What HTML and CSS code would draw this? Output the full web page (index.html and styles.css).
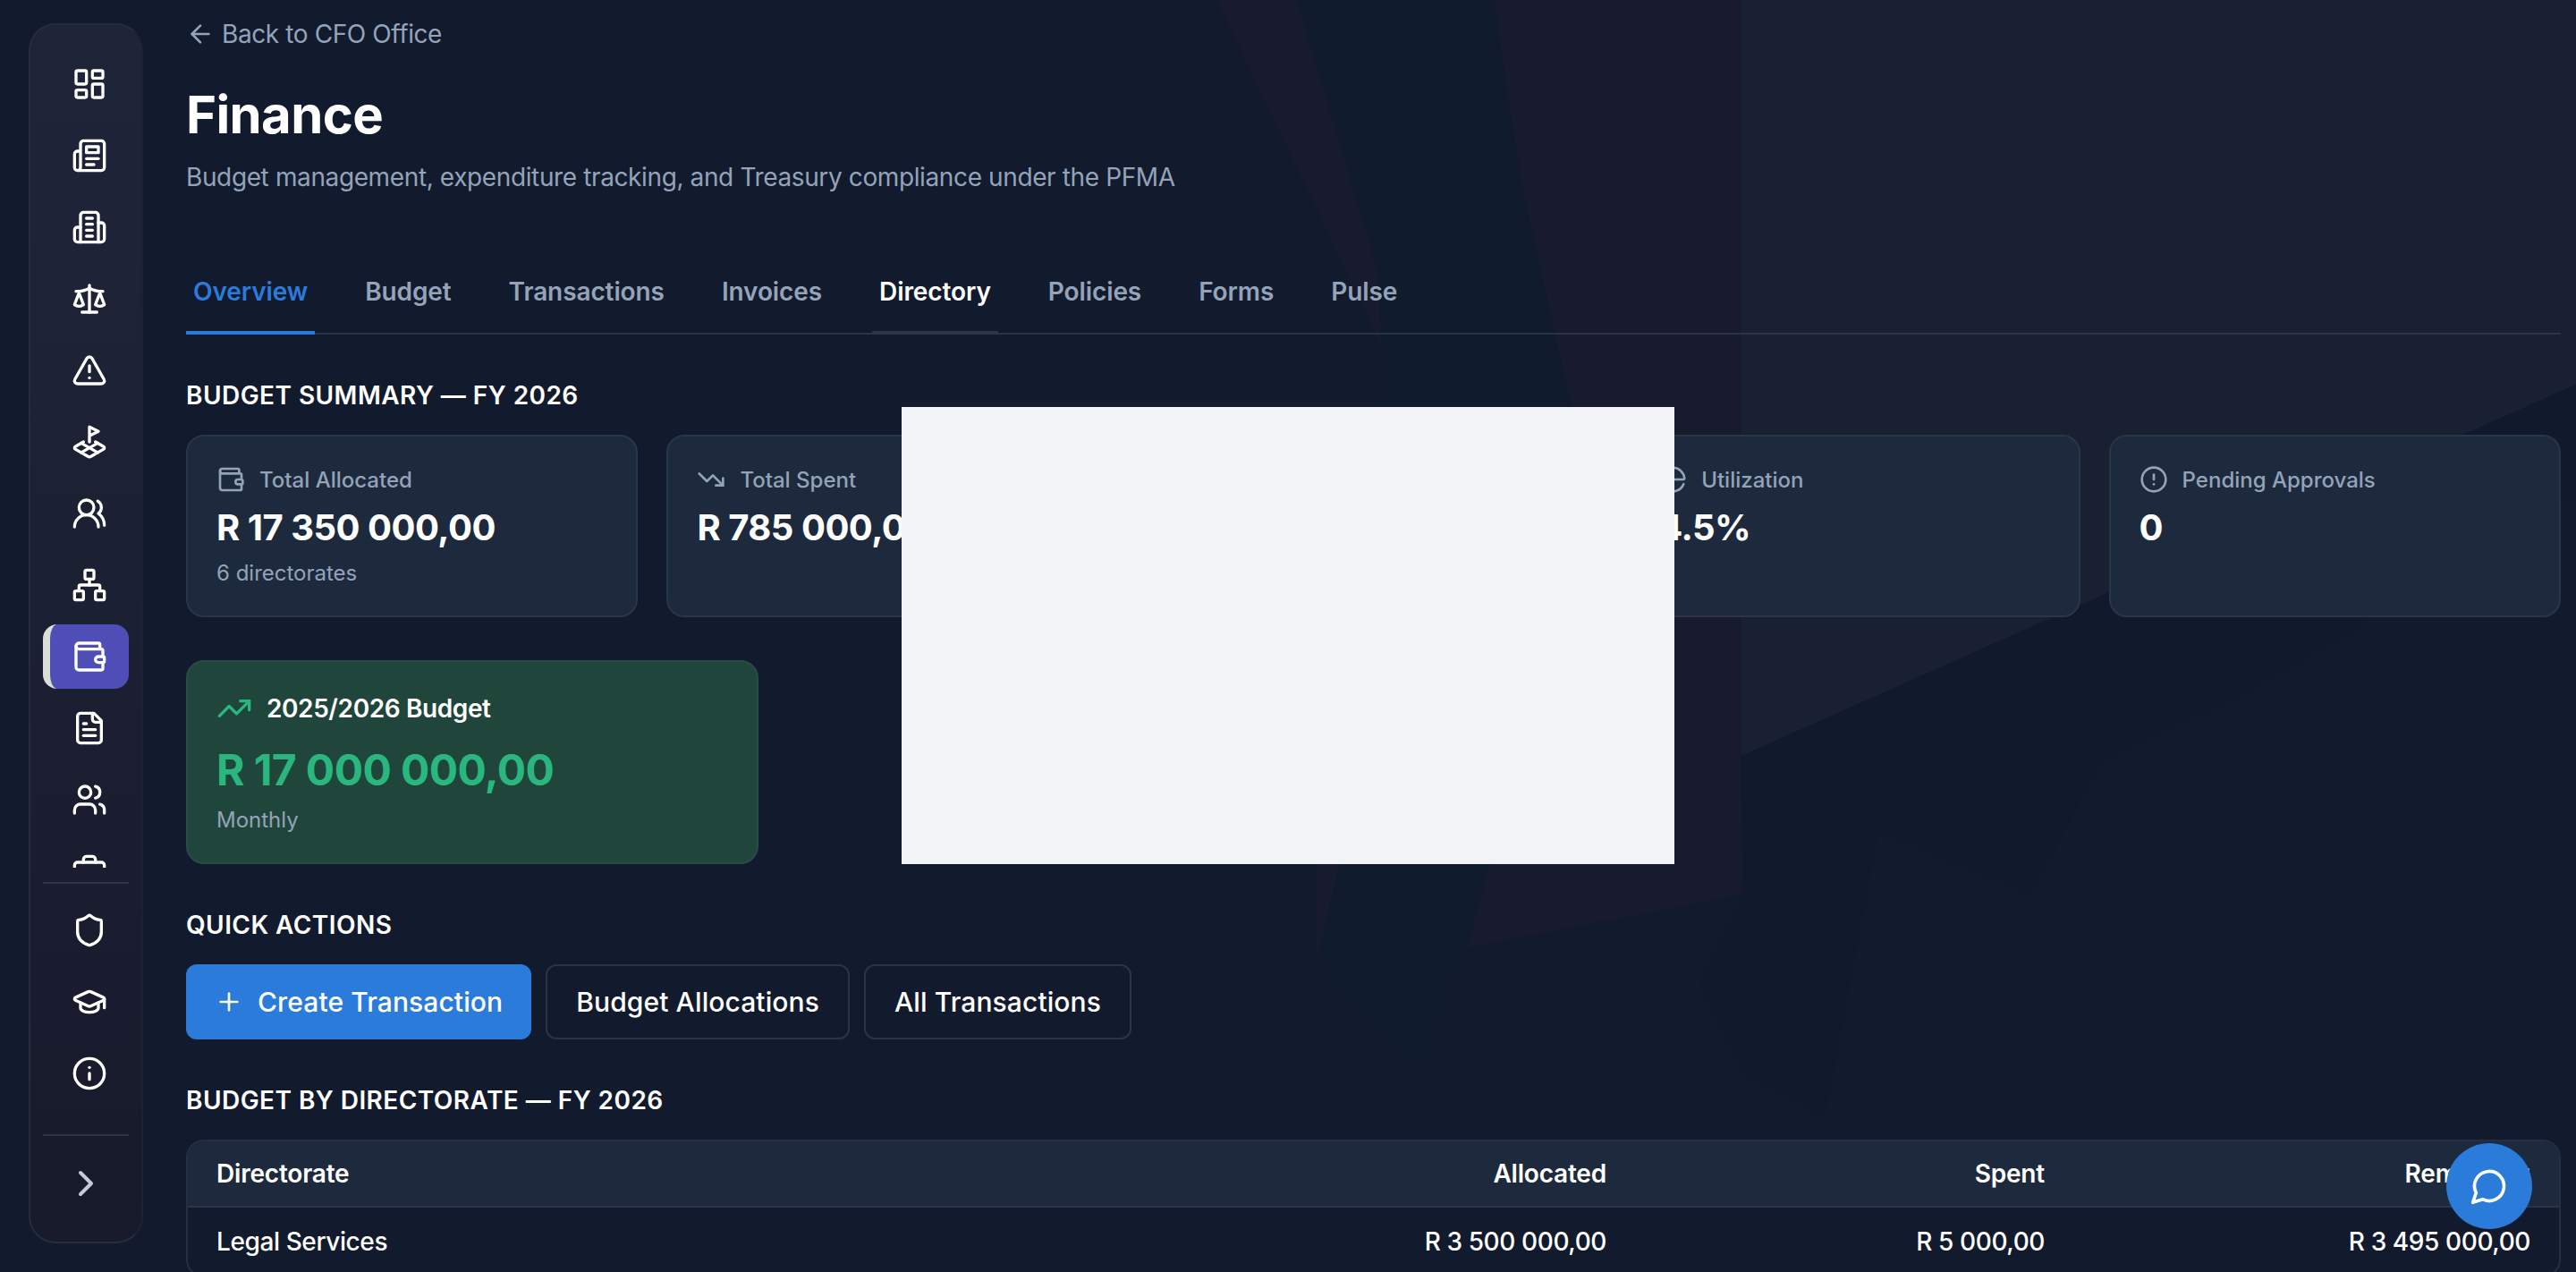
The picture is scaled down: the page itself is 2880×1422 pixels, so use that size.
FILE: index.html
```html
<!DOCTYPE html>
<html>
	<head>
		<meta charset="UTF-8">
		<title>Finance</title>
		<link rel="stylesheet" href="styles.css">
	</head>
	<body>
		<!-- faint shapes behind the page -->
		<svg class="backdrop" viewBox="0 0 2880 1422">
			<polygon class="bg-light" points="1947,0 2880,0 2880,430 1947,845"/>
			<polygon class="bg-red" points="1360,0 1947,0 1947,1000 1640,1060 1590,1075 1472,1075 1472,966 1560,700 1575,450"/>
			<polygon class="bg-navy" points="1450,0 1670,0 1700,200 1780,560 1700,840 1640,1060 1590,1200 1472,1075 1560,700 1540,300"/>
			<polygon class="bg-dark" points="1947,845 2880,430 2880,560 2700,520 2640,700 2500,780 2350,850 2270,1000 2100,930 2040,1250 1950,1200 1900,1100 1950,1000"/>
		</svg>

		<aside class="sidebar">
			<nav class="nav-scroll">
				<a class="nav-item"><svg class="icon" viewBox="0 0 24 24"><rect x="3" y="3" width="7" height="9" rx="1"/><rect x="14" y="3" width="7" height="5" rx="1"/><rect x="14" y="12" width="7" height="9" rx="1"/><rect x="3" y="16" width="7" height="5" rx="1"/></svg></a>
				<a class="nav-item"><svg class="icon" viewBox="0 0 24 24"><path d="M4 22h16a2 2 0 0 0 2-2V4a2 2 0 0 0-2-2H8a2 2 0 0 0-2 2v16a2 2 0 0 1-2 2Zm0 0a2 2 0 0 1-2-2v-9c0-1.1.9-2 2-2h2"/><path d="M18 14h-8"/><path d="M15 18h-5"/><path d="M10 6h8v4h-8V6Z"/></svg></a>
				<a class="nav-item"><svg class="icon" viewBox="0 0 24 24"><path d="M6 22V4a2 2 0 0 1 2-2h8a2 2 0 0 1 2 2v18Z"/><path d="M6 12H4a2 2 0 0 0-2 2v6a2 2 0 0 0 2 2h2"/><path d="M18 9h2a2 2 0 0 1 2 2v9a2 2 0 0 1-2 2h-2"/><path d="M10 6h4"/><path d="M10 10h4"/><path d="M10 14h4"/><path d="M10 18h4"/></svg></a>
				<a class="nav-item"><svg class="icon" viewBox="0 0 24 24"><path d="m16 16 3-8 3 8c-.87.65-1.92 1-3 1s-2.13-.35-3-1Z"/><path d="m2 16 3-8 3 8c-.87.65-1.92 1-3 1s-2.13-.35-3-1Z"/><path d="M7 21h10"/><path d="M12 3v18"/><path d="M3 7h2c2 0 5-1 7-2 2 1 5 2 7 2h2"/></svg></a>
				<a class="nav-item"><svg class="icon" viewBox="0 0 24 24"><path d="m21.73 18-8-14a2 2 0 0 0-3.48 0l-8 14A2 2 0 0 0 4 21h16a2 2 0 0 0 1.73-3"/><path d="M12 9v4"/><path d="M12 17h.01"/></svg></a>
				<a class="nav-item"><svg class="icon" viewBox="0 0 24 24"><path d="m12 8 6-3-6-3v10"/><path d="m8 11.99-5.5 3.14a1 1 0 0 0 0 1.74l8.5 4.86a2 2 0 0 0 2 0l8.5-4.86a1 1 0 0 0 0-1.74L16 12"/><path d="m6.49 12.85 11.02 6.3"/><path d="M17.51 12.85 6.5 19.15"/></svg></a>
				<a class="nav-item"><svg class="icon" viewBox="0 0 24 24"><path d="M18 21a8 8 0 0 0-16 0"/><circle cx="10" cy="8" r="5"/><path d="M22 20c0-3.37-2-6.5-4-8a5 5 0 0 0-.45-8.3"/></svg></a>
				<a class="nav-item"><svg class="icon" viewBox="0 0 24 24"><rect x="16" y="16" width="6" height="6" rx="1"/><rect x="2" y="16" width="6" height="6" rx="1"/><rect x="9" y="2" width="6" height="6" rx="1"/><path d="M5 16v-3a1 1 0 0 1 1-1h12a1 1 0 0 1 1 1v3"/><path d="M12 12V8"/></svg></a>
				<a class="nav-item active"><svg class="icon" viewBox="0 0 24 24"><path d="M19 7V4a1 1 0 0 0-1-1H5a2 2 0 0 0 0 4h15a1 1 0 0 1 1 1v4h-3a2 2 0 0 0 0 4h3a1 1 0 0 0 1-1v-2a1 1 0 0 0-1-1"/><path d="M3 5v14a2 2 0 0 0 2 2h15a1 1 0 0 0 1-1v-4"/></svg></a>
				<a class="nav-item"><svg class="icon" viewBox="0 0 24 24"><path d="M15 2H6a2 2 0 0 0-2 2v16a2 2 0 0 0 2 2h12a2 2 0 0 0 2-2V7Z"/><path d="M14 2v4a2 2 0 0 0 2 2h4"/><path d="M10 9H8"/><path d="M16 13H8"/><path d="M16 17H8"/></svg></a>
				<a class="nav-item"><svg class="icon" viewBox="0 0 24 24"><path d="M16 21v-2a4 4 0 0 0-4-4H6a4 4 0 0 0-4 4v2"/><circle cx="9" cy="7" r="4"/><path d="M22 21v-2a4 4 0 0 0-3-3.87"/><path d="M16 3.13a4 4 0 0 1 0 7.75"/></svg></a>
				<a class="nav-item"><svg class="icon" viewBox="0 0 24 24"><path d="M12 12h.01"/><path d="M16 6V4a2 2 0 0 0-2-2h-4a2 2 0 0 0-2 2v2"/><path d="M22 13a18.15 18.15 0 0 1-20 0"/><rect x="2" y="6" width="20" height="14" rx="2"/></svg></a>
			</nav>
			<hr class="nav-line">
			<nav class="nav-foot">
				<a class="nav-item"><svg class="icon" viewBox="0 0 24 24"><path d="M20 13c0 5-3.5 7.5-7.66 8.95a1 1 0 0 1-.67-.01C7.5 20.5 4 18 4 13V6a1 1 0 0 1 1-1c2 0 4.5-1.2 6.24-2.72a1.17 1.17 0 0 1 1.52 0C14.51 3.81 17 5 19 5a1 1 0 0 1 1 1z"/></svg></a>
				<a class="nav-item"><svg class="icon" viewBox="0 0 24 24"><path d="M21.42 10.922a1 1 0 0 0-.019-1.838L12.83 5.18a2 2 0 0 0-1.66 0L2.6 9.08a1 1 0 0 0 0 1.832l8.57 3.908a2 2 0 0 0 1.66 0z"/><path d="M22 10v6"/><path d="M6 12.5V16a6 3 0 0 0 12 0v-3.5"/></svg></a>
				<a class="nav-item"><svg class="icon" viewBox="0 0 24 24"><circle cx="12" cy="12" r="10"/><path d="M12 16v-4"/><path d="M12 8h.01"/></svg></a>
			</nav>
			<hr class="nav-line bottom">
			<a class="collapse"><svg class="icon-collapse" viewBox="0 0 24 24"><path d="m9 18 6-6-6-6"/></svg></a>
		</aside>

		<main class="main">
			<a class="back"><svg class="icon-back" viewBox="0 0 24 24"><path d="m12 19-7-7 7-7"/><path d="M19 12H5"/></svg>Back to CFO Office</a>
			<h1 class="title">Finance</h1>
			<p class="subtitle">Budget management, expenditure tracking, and Treasury compliance under the PFMA</p>

			<div class="tabs">
				<a class="tab current">Overview</a>
				<a class="tab">Budget</a>
				<a class="tab">Transactions</a>
				<a class="tab">Invoices</a>
				<a class="tab hover">Directory</a>
				<a class="tab">Policies</a>
				<a class="tab">Forms</a>
				<a class="tab">Pulse</a>
			</div>

			<h2 class="section summary-title">BUDGET SUMMARY — FY 2026</h2>
			<div class="cards">
				<div class="card">
					<div class="card-label"><svg class="icon-sm" viewBox="0 0 24 24"><path d="M19 7V4a1 1 0 0 0-1-1H5a2 2 0 0 0 0 4h15a1 1 0 0 1 1 1v4h-3a2 2 0 0 0 0 4h3a1 1 0 0 0 1-1v-2a1 1 0 0 0-1-1"/><path d="M3 5v14a2 2 0 0 0 2 2h15a1 1 0 0 0 1-1v-4"/></svg>Total Allocated</div>
					<div class="card-value">R 17 350 000,00</div>
					<div class="card-note">6 directorates</div>
				</div>
				<div class="card">
					<div class="card-label"><svg class="icon-sm" viewBox="0 0 24 24"><path d="M16 17h6v-6"/><path d="m22 17-8.5-8.5-5 5L2 7"/></svg>Total Spent</div>
					<div class="card-value">R 785 000,00</div>
				</div>
				<div class="card">
					<div class="card-label"><svg class="icon-sm" viewBox="0 0 24 24"><circle cx="12" cy="12" r="10"/></svg>Remaining</div>
					<div class="card-value">R 16 565 000,00</div>
				</div>
				<div class="card">
					<div class="card-label"><svg class="icon-sm" viewBox="0 0 24 24"><path d="M21 12c.552 0 1.005-.449.95-.998a10 10 0 0 0-8.953-8.951c-.55-.055-.998.398-.998.95v8a1 1 0 0 0 1 1z"/><path d="M21.21 15.89A10 10 0 1 1 8 2.83"/></svg>Utilization</div>
					<div class="card-value">4.5%</div>
				</div>
				<div class="card">
					<div class="card-label"><svg class="icon-sm" viewBox="0 0 24 24"><circle cx="12" cy="12" r="10"/><path d="M12 8v4"/><path d="M12 16h.01"/></svg>Pending Approvals</div>
					<div class="card-value">0</div>
				</div>
			</div>

			<div class="budget-card">
				<div class="budget-label"><svg class="icon-trend" viewBox="0 0 24 24"><path d="M16 7h6v6"/><path d="m22 7-8.5 8.5-5-5L2 17"/></svg>2025/2026 Budget</div>
				<div class="budget-value">R 17 000 000,00</div>
				<div class="budget-note">Monthly</div>
			</div>

			<h2 class="section actions-title">QUICK ACTIONS</h2>
			<div class="actions">
				<a class="btn primary"><svg class="icon-plus" viewBox="0 0 24 24"><path d="M5 12h14"/><path d="M12 5v14"/></svg>Create Transaction</a>
				<a class="btn">Budget Allocations</a>
				<a class="btn">All Transactions</a>
			</div>

			<h2 class="section table-title">BUDGET BY DIRECTORATE — FY 2026</h2>
			<table class="budget-table" cellspacing="0" cellpadding="0">
				<tr>
					<th class="name">Directorate</th>
					<th class="col-allocated">Allocated</th>
					<th class="col-spent">Spent</th>
					<th class="col-remaining">Remaining</th>
				</tr>
				<tr>
					<td class="name">Legal Services</td>
					<td>R 3 500 000,00</td>
					<td>R 5 000,00</td>
					<td>R 3 495 000,00</td>
				</tr>
			</table>
		</main>

		<div class="redacted"></div>
		<a class="chat"><svg class="icon-chat" viewBox="0 0 24 24"><path d="M7.9 20A9 9 0 1 0 4 16.1L2 22Z"/></svg></a>
	</body>
</html>
```

FILE: styles.css
```css
* {
	box-sizing: border-box;
}

html,
body {
	margin: 0;
	padding: 0;
	height: 1422px;
	overflow: hidden;
}

body {
	display: flex;
	align-items: flex-start;
	font-family: Inter, "Liberation Sans", sans-serif;
	color: #fff;
	background: #121a2d;
}

svg {
	fill: none;
	stroke: currentColor;
	stroke-width: 2;
	stroke-linecap: round;
	stroke-linejoin: round;
	flex-shrink: 0;
}

.backdrop {
	position: absolute;
	left: 0;
	top: 0;
	width: 2880px;
	height: 1422px;
	stroke: none;
	z-index: -1;
}

.bg-light {
	fill: #182032;
}

.bg-red {
	fill: #171b2d;
}

.bg-navy {
	fill: #111b2e;
}

.bg-dark {
	fill: #11192c;
}

/* sidebar */
.sidebar {
	width: 128px;
	height: 1364px;
	margin: 26px 0 0 32px;
	flex-shrink: 0;
	padding: 0 16px;
	background: linear-gradient(180deg, #1f2539 0%, #1c2033 45%, #171a2b 100%);
	border: 2px solid #262c3e;
	border-right-color: #1d2131;
	border-radius: 30px;
}

.nav-scroll {
	height: 912px;
	margin: 30px -2px 0;
	overflow: hidden;
}

.nav-item {
	display: flex;
	align-items: center;
	justify-content: center;
	width: 96px;
	height: 72px;
	margin-bottom: 8px;
	border-left: 8px solid transparent;
	border-radius: 16px;
	color: #fff;
}

.nav-item.active {
	background: #4f4db6;
	border-left-color: #dcdcd8;
}

.icon {
	width: 40px;
	height: 40px;
}

.nav-line {
	height: 2px;
	margin: 16px -2px 0;
	border: 0;
	background: #2b3648;
}

.nav-foot {
	margin: 16px -2px 0;
}

.nav-line.bottom {
	margin-top: 32px;
}

.collapse {
	display: flex;
	align-items: center;
	justify-content: center;
	width: 96px;
	height: 36px;
	margin: 35px 0 0 -2px;
	color: #c8c9d6;
}

.icon-collapse {
	width: 48px;
	height: 48px;
}

/* main column */
.main {
	flex: 1;
	min-width: 0;
	padding: 21px 17px 0 48px;
}

.back {
	display: flex;
	align-items: center;
	gap: 8px;
	height: 34px;
	font-size: 28px;
	letter-spacing: -0.4px;
	color: #94a3b8;
}

.icon-back {
	width: 32px;
	height: 32px;
}

.title {
	margin: 37px 0 0;
	font-size: 58px;
	line-height: 72px;
	font-weight: 700;
	letter-spacing: -0.6px;
}

.subtitle {
	margin: 14px 0 0;
	font-size: 28px;
	line-height: 40px;
	letter-spacing: -0.38px;
	color: #94a3b8;
}

.tabs {
	display: flex;
	gap: 48px;
	margin-top: 88px;
	border-bottom: 2px solid #2a3446;
}

.tab {
	padding: 0 8px 24px;
	margin-bottom: -2px;
	font-size: 28px;
	line-height: 40px;
	font-weight: 600;
	letter-spacing: -0.1px;
	color: #94a3b8;
	border-bottom: 4px solid transparent;
}

.tab.current {
	color: #2b7bdb;
	border-bottom-color: #2b7bdb;
}

.tab.hover {
	color: #fff;
	border-bottom-color: #2b3648;
}

.section {
	margin: 0;
	font-size: 28px;
	line-height: 40px;
	font-weight: 600;
	letter-spacing: 0.45px;
}

.summary-title {
	margin-top: 48px;
}

.cards {
	display: grid;
	grid-template-columns: repeat(5, 1fr);
	gap: 32px;
	margin-top: 24px;
}

.card {
	height: 204px;
	padding: 32px;
	background: #1d2a3e;
	border: 2px solid #2a3648;
	border-radius: 20px;
}

.card-label {
	display: flex;
	align-items: center;
	gap: 16px;
	height: 32px;
	font-size: 24px;
	font-weight: 500;
	color: #94a3b8;
}

.icon-sm {
	width: 32px;
	height: 32px;
}

.card-value {
	margin-top: 8px;
	font-size: 40px;
	line-height: 60px;
	font-weight: 700;
	letter-spacing: -0.5px;
}

.card-note {
	margin-top: 3px;
	font-size: 24px;
	line-height: 36px;
	color: #94a3b8;
}

.budget-card {
	width: 640px;
	height: 228px;
	margin-top: 48px;
	padding: 32px;
	background: #20463b;
	border: 2px solid #2a4a48;
	border-radius: 20px;
}

.budget-label {
	display: flex;
	align-items: center;
	gap: 16px;
	height: 40px;
	font-size: 28px;
	font-weight: 600;
	letter-spacing: -0.4px;
}

.icon-trend {
	width: 40px;
	height: 40px;
	color: #2ab67f;
}

.budget-value {
	margin-top: 17px;
	font-size: 48px;
	line-height: 64px;
	font-weight: 700;
	letter-spacing: -0.6px;
	color: #2ab67f;
}

.budget-note {
	margin-top: 8px;
	font-size: 24px;
	line-height: 32px;
	color: #94a3b8;
}

.actions-title {
	margin-top: 48px;
}

.actions {
	display: flex;
	gap: 16px;
	margin-top: 24px;
}

.btn {
	display: flex;
	align-items: center;
	gap: 16px;
	height: 84px;
	padding: 0 32px;
	font-size: 30px;
	font-weight: 500;
	letter-spacing: 0.1px;
	background: transparent;
	border: 2px solid #2a3446;
	border-radius: 12px;
}

.btn.primary {
	background: #2b7bdb;
	border: 0;
}

.icon-plus {
	width: 32px;
	height: 32px;
}

.table-title {
	margin-top: 48px;
}

.budget-table {
	width: 100%;
	margin-top: 24px;
	border: 2px solid #242f42;
	border-radius: 20px;
	border-spacing: 0;
	font-size: 28px;
}

.budget-table th {
	height: 74px;
	padding: 0 32px;
	text-align: right;
	font-weight: 600;
	letter-spacing: -0.2px;
	background: #1d2a3e;
	border-bottom: 2px solid #2a3648;
}

.budget-table td {
	height: 76px;
	padding: 0 32px;
	text-align: right;
	font-weight: 500;
	letter-spacing: -0.4px;
}

.budget-table .name {
	text-align: left;
}

.budget-table th.name {
	border-top-left-radius: 18px;
}

.budget-table th.col-remaining {
	border-top-right-radius: 18px;
}

.col-allocated {
	width: 500px;
}

.col-spent {
	width: 490px;
}

.col-remaining {
	width: 543px;
}

/* grey block across the middle of the shot */
.redacted {
	position: absolute;
	left: 1008px;
	top: 455px;
	width: 864px;
	height: 511px;
	background: #f1f3f7;
}

.chat {
	position: fixed;
	right: 49px;
	bottom: 48px;
	display: flex;
	align-items: center;
	justify-content: center;
	width: 96px;
	height: 96px;
	border-radius: 50%;
	background: #2b7bdb;
	color: #fff;
}

.icon-chat {
	width: 44px;
	height: 44px;
}
```
